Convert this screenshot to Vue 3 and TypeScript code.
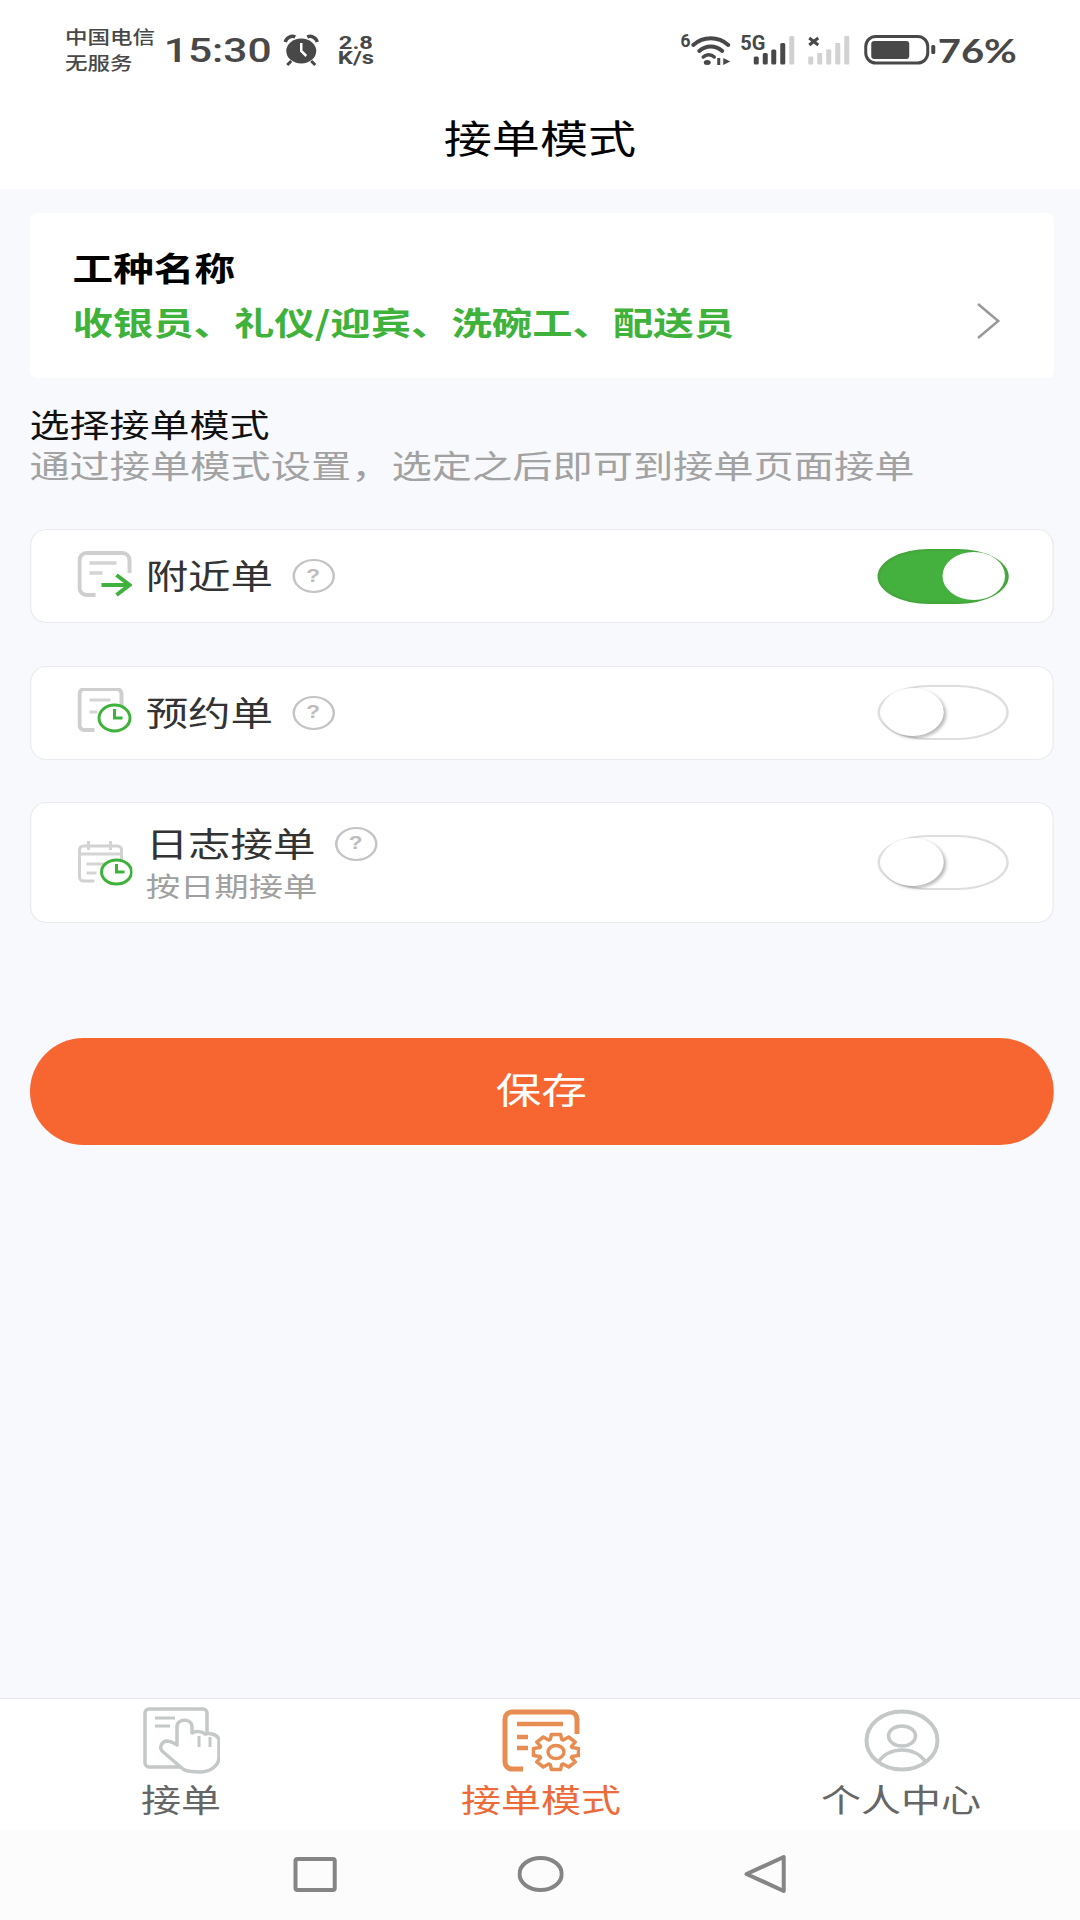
<template>
  <!-- the reference is stretched sideways, so the page is laid out at 864px and widened to 1080 -->
  <div class="screen">
    <div class="status">
      <div class="carrier">
        <span>中国电信</span>
        <span>无服务</span>
      </div>
      <span class="time">15:30</span>
      <svg class="alarm" viewBox="0 0 40 34" preserveAspectRatio="none">
        <ellipse cx="20" cy="18" rx="15" ry="12.500" fill="#484848" />
        <path d="M20 10v8l5 5" fill="none" stroke="#fff" stroke-width="2.5" />
        <path d="M4 9c1-4 6-7 10-5M36 9c-1-4-6-7-10-5" fill="none" stroke="#484848" stroke-width="3.5" />
        <path d="M10 28l-4 4M30 28l4 4" stroke="#484848" stroke-width="3" />
      </svg>
      <div class="speed">
        <span>2.8</span>
        <span>K/s</span>
      </div>
      <svg class="signals" viewBox="680 30 255 40" preserveAspectRatio="none">
        <text x="679" y="47" font-size="18" font-weight="700" font-family="Roboto" fill="#484848">6</text>
        <g fill="none" stroke="#484848" stroke-width="4" stroke-linecap="round">
          <path d="M692 45c10-9 25-9 35 0" />
          <path d="M698 51c7-6 16-6 23 0" />
          <path d="M702 57c3-3 8-3 11 0" stroke-width="3.5" />
        </g>
        <ellipse cx="706" cy="62.500" rx="3.500" ry="2.500" fill="#484848" />
        <rect x="716" y="58" width="3" height="7" fill="#484848" />
        <path d="M722 58l7 3.500-7 3.500z" fill="#484848" />
        <text x="739" y="50" font-size="20" font-weight="700" font-family="Roboto" fill="#484848">5G</text>
        <g fill="#484848">
          <rect x="752.500" y="56.500" width="5" height="8" rx="1.500" />
          <rect x="761.500" y="53" width="5" height="11.500" rx="1.500" />
          <rect x="770" y="49.500" width="5" height="15" rx="1.500" />
          <rect x="779" y="43" width="5" height="21.500" rx="1.500" />
        </g>
        <rect x="788" y="36" width="5" height="28.500" rx="1.500" fill="#d0d0d0" />
        <path d="M808 38l9 7M817 38l-9 7" stroke="#484848" stroke-width="3" />
        <g fill="#d2d2d2">
          <rect x="807" y="56.500" width="5" height="8" rx="1" />
          <rect x="816" y="53" width="5" height="11.500" rx="1" />
          <rect x="825" y="49.500" width="5" height="15" rx="1" />
          <rect x="834" y="43" width="5" height="21.500" rx="1" />
          <rect x="843" y="36" width="5" height="28.500" rx="1" />
        </g>
        <rect x="864.500" y="36.500" width="62" height="26.500" rx="10" fill="none" stroke="#484848" stroke-width="3" />
        <rect x="870" y="41" width="38" height="18" rx="3" fill="#484848" />
        <rect x="930" y="45" width="4" height="9" rx="1.500" fill="#484848" />
      </svg>
      <span class="battery">76%</span>
    </div>

    <header class="title">接单模式</header>

    <main class="content">
      <section class="trade">
        <div class="trade-name">工种名称</div>
        <div class="trade-line">
          <span class="trade-list">收银员、礼仪/迎宾、洗碗工、配送员</span>
          <svg class="chevron" viewBox="0 0 26 38" preserveAspectRatio="none">
            <path d="M3 2l20 17L3 36" fill="none" stroke="#999" stroke-width="2.500" />
          </svg>
        </div>
      </section>

      <div class="heading">选择接单模式</div>
      <div class="hint">通过接单模式设置，选定之后即可到接单页面接单</div>

      <div class="modes">
        <div v-for="mode in modes" :key="mode.id" class="mode" :class="{ tall: mode.sub }">
          <svg v-if="mode.id === 'near'" class="mode-icon" viewBox="0 0 55 50" preserveAspectRatio="none">
            <path d="M18 44H9a7 7 0 0 1-7-7V9a7 7 0 0 1 7-7h36a7 7 0 0 1 7 7v13" fill="none" stroke="#cfcfcf" stroke-width="4" />
            <path d="M12 12h27M12 22h13" stroke="#d4d4d4" stroke-width="3.500" />
            <path d="M24 34h27M39 24l13 10-13 10" fill="none" stroke="#3fb23c" stroke-width="4" />
          </svg>
          <svg v-else-if="mode.id === 'book'" class="mode-icon" viewBox="0 0 55 50" preserveAspectRatio="none">
            <path d="M17 42H7a5 5 0 0 1-5-5V6a5 5 0 0 1 5-5h32a5 5 0 0 1 5 5v12" fill="none" stroke="#cfcfcf" stroke-width="4" />
            <path d="M12 12h21M12 24h8" stroke="#d4d4d4" stroke-width="3" />
            <ellipse cx="37" cy="30" rx="15.500" ry="13" fill="#fff" stroke="#3fb23c" stroke-width="3" />
            <path d="M37 21v9h8" fill="none" stroke="#3fb23c" stroke-width="3" />
          </svg>
          <svg v-else class="mode-icon" viewBox="0 0 55 50" preserveAspectRatio="none">
            <path d="M17 43H6a4 4 0 0 1-4-4V12a4 4 0 0 1 4-4h34a4 4 0 0 1 4 4v10" fill="none" stroke="#d2d2d2" stroke-width="3" />
            <path d="M11 3v9M33 3v9M3 16h40M9 26h22M9 35h10" stroke="#d4d4d4" stroke-width="3" />
            <ellipse cx="39" cy="34" rx="15" ry="12" fill="#fff" stroke="#3fb23c" stroke-width="3" />
            <path d="M39 26v8h8" fill="none" stroke="#3fb23c" stroke-width="3" />
          </svg>

          <div class="mode-text">
            <div class="mode-head">
              <span class="mode-name">{{ mode.name }}</span>
              <span class="help">?</span>
            </div>
            <div v-if="mode.sub" class="mode-sub">{{ mode.sub }}</div>
          </div>

          <div class="switch" :class="{ on: mode.on }">
            <span class="knob"></span>
          </div>
        </div>
      </div>

      <button class="save">保存</button>
    </main>

    <nav class="tabs">
      <div class="tab">
        <svg class="tab-icon" viewBox="-3 0 80 70" preserveAspectRatio="none">
          <path d="M6 3h54a4 4 0 0 1 4 4v50a4 4 0 0 1-4 4H6a4 4 0 0 1-4-4V7a4 4 0 0 1 4-4z" fill="none" stroke="#c5c8c8" stroke-width="3.500" />
          <path d="M12 12h20M12 20h15" stroke="#c5c8c8" stroke-width="3" />
          <path d="M34 39V21c0-9 15-9 15 0v6c3-2 10-2 13 1 4-1 14 0 14 7v16c0 9-9 15-19 15-8 0-14-1-17-3L19 45c-3-4 0-9 4-10 4 0 8 2 11 4z" fill="#fff" stroke="#c5c8c8" stroke-width="3.500" stroke-linejoin="round" />
          <path d="M56 30v11M67 31v10" stroke="#c5c8c8" stroke-width="3" />
        </svg>
        <span>接单</span>
      </div>
      <div class="tab active">
        <svg class="tab-icon" viewBox="0 0 80 70" preserveAspectRatio="none">
          <path d="M23 63H12a7 7 0 0 1-7-7V13a7 7 0 0 1 7-7h58a7 7 0 0 1 7 7v15" fill="none" stroke="#e88d52" stroke-width="5" />
          <path d="M17 18h46M17 31h11M17 42h11" stroke="#e88d52" stroke-width="4.500" />
          <path :d="gear" fill="#fff" stroke="#e88d52" stroke-width="3.500" stroke-linejoin="round" />
          <ellipse cx="56" cy="46" rx="8" ry="6.500" fill="none" stroke="#e88d52" stroke-width="3.500" />
        </svg>
        <span>接单模式</span>
      </div>
      <div class="tab">
        <svg class="tab-icon" viewBox="0 0 80 70" preserveAspectRatio="none">
          <ellipse cx="42" cy="34.500" rx="35.500" ry="29" fill="none" stroke="#c5c8c8" stroke-width="4" />
          <ellipse cx="42" cy="30" rx="13.500" ry="10" fill="none" stroke="#c5c8c8" stroke-width="3.500" />
          <path d="M18 56c6-8 14-12 24-12s18 4 24 12" fill="none" stroke="#c5c8c8" stroke-width="3.500" />
        </svg>
        <span>个人中心</span>
      </div>
    </nav>

    <div class="keys">
      <svg class="key" viewBox="0 0 46 40" preserveAspectRatio="none">
        <rect x="3" y="5" width="39" height="31" rx="2" fill="none" stroke="#858585" stroke-width="4" />
      </svg>
      <svg class="key" viewBox="0 0 46 40" preserveAspectRatio="none">
        <ellipse cx="23" cy="20" rx="21" ry="16" fill="none" stroke="#858585" stroke-width="4" />
      </svg>
      <svg class="key" viewBox="0 0 46 40" preserveAspectRatio="none">
        <path d="M4 20L41 3v34z" fill="none" stroke="#858585" stroke-width="4" stroke-linejoin="round" />
      </svg>
    </div>
  </div>
</template>

<script setup lang="ts">
interface Mode {
  id: string;
  name: string;
  sub?: string;
  on: boolean;
}

const modes: Mode[] = [
  { id: "near", name: "附近单", on: true },
  { id: "book", name: "预约单", on: false },
  { id: "log", name: "日志接单", sub: "按日期接单", on: false },
];

// 8 teeth, drawn directly in the stretched proportions of the tab icon
const makeGear = (cx: number, cy: number, rx: number, ry: number): string => {
  const points: string[] = [];
  for (let i = 0; i < 8; i++) {
    const a = (i * Math.PI) / 4;
    for (const [da, k] of [
      [-0.34, 0.74],
      [-0.2, 1],
      [0.2, 1],
      [0.34, 0.74],
    ]) {
      points.push(`${(cx + Math.cos(a + da) * rx * k).toFixed(1)} ${(cy + Math.sin(a + da) * ry * k).toFixed(1)}`);
    }
  }
  return `M${points.join("L")}z`;
};

const gear = makeGear(56, 46, 23, 18);
</script>

<style>
html,
body {
  margin: 0;
  background: #f8f9fd;
}
</style>

<style scoped>
.screen {
  width: 864px;
  height: 1920px;
  display: flex;
  flex-direction: column;
  transform: scaleX(1.25);
  transform-origin: 0 0;
  background: #f8f9fd;
  font-family: "Noto Sans CJK SC", "Noto Sans", sans-serif;
  color: #333;
  overflow: hidden;
}

.status {
  height: 100px;
  display: flex;
  align-items: center;
  padding-left: 52px;
  background: #fff;
  color: #484848;
}

.carrier {
  width: 72px;
  padding-bottom: 2px;
  display: flex;
  flex-direction: column;
  font-size: 18px;
  font-weight: 500;
  line-height: 26px;
  white-space: nowrap;
}

.time {
  margin-left: 7px;
  font-family: Roboto, sans-serif;
  font-size: 34px;
  font-weight: 500;
  white-space: nowrap;
}

.alarm {
  width: 32px;
  height: 34px;
  margin-left: 8px;
}

.speed {
  margin-left: 13px;
  display: flex;
  flex-direction: column;
  align-items: center;
  font-family: Roboto, sans-serif;
  font-size: 19px;
  font-weight: 700;
  line-height: 15px;
}

.signals {
  width: 204px;
  height: 40px;
  margin-left: 246px;
}

.battery {
  margin-left: 1px;
  font-family: Lato, sans-serif;
  font-size: 32px;
  font-weight: 700;
  white-space: nowrap;
}

.title {
  height: 71px;
  padding-bottom: 18px;
  display: flex;
  align-items: center;
  justify-content: center;
  background: #fff;
  color: #000;
  font-size: 38.5px;
}

.content {
  flex: 1;
  padding: 24px 21.5px 0 23.5px;
}

.trade {
  height: 165px;
  box-sizing: border-box;
  padding: 0 42px 4px 34.5px;
  display: flex;
  flex-direction: column;
  justify-content: center;
  background: #fff;
  border-radius: 6px;
}

.trade-name {
  font-size: 32.5px;
  font-weight: 700;
  line-height: 54px;
  color: #000;
}

.trade-line {
  display: flex;
  align-items: center;
  justify-content: space-between;
  line-height: 54px;
}

.trade-list {
  font-size: 32.3px;
  font-weight: 700;
  color: #3fb23c;
}

.chevron {
  width: 21px;
  height: 38px;
}

.heading {
  margin-top: 25px;
  font-size: 32px;
  line-height: 41px;
  color: #111;
}

.hint {
  font-size: 32.2px;
  line-height: 41px;
  color: #a2a2a2;
}

.modes {
  margin-top: 44px;
  display: flex;
  flex-direction: column;
  gap: 42.5px;
}

.mode {
  height: 94px;
  box-sizing: border-box;
  padding: 0 35px 0 37px;
  display: flex;
  align-items: center;
  background: #fff;
  border: 1px solid #e9ebef;
  border-radius: 13px / 16px;
}

.mode.tall {
  height: 121px;
}

.mode-icon {
  width: 44px;
  height: 50px;
  flex: none;
}

.mode-text {
  flex: 1;
  margin-left: 11px;
}

.tall .mode-text {
  padding-bottom: 2px;
}

.mode-head {
  display: flex;
  align-items: center;
}

.mode-name {
  padding-bottom: 2px;
  font-size: 34px;
  line-height: 44px;
  color: #333;
}

.help {
  width: 34px;
  height: 34px;
  box-sizing: border-box;
  margin-left: 15px;
  display: flex;
  align-items: center;
  justify-content: center;
  border: 2.5px solid #c4c4c4;
  border-radius: 50%;
  font-family: "Liberation Sans", sans-serif;
  font-size: 18px;
  font-weight: 700;
  color: #bcbcbc;
}

.mode-sub {
  font-size: 27.5px;
  line-height: 36px;
  color: #a0a0a0;
}

.switch {
  width: 105px;
  height: 55px;
  box-sizing: border-box;
  padding: 1px;
  display: flex;
  border: 2.5px solid #dedede;
  border-radius: 42px / 28px;
  background: #fff;
}

.switch.on {
  justify-content: flex-end;
  background: #44b03d;
  border-color: #44a63d;
}

.knob {
  width: 50px;
  height: 48px;
  border-radius: 50%;
  background: #fff;
  box-shadow: 2px 2px 3px rgba(0, 0, 0, 0.28);
}

.on .knob {
  box-shadow: none;
}

.save {
  width: 100%;
  height: 107px;
  margin-top: 115px;
  padding: 0 0 6px;
  display: block;
  border: none;
  border-radius: 43px / 53.5px;
  background: #f76530;
  color: #fff;
  font-family: inherit;
  font-size: 36.5px;
}

.tabs {
  height: 131px;
  display: grid;
  grid-template-columns: repeat(3, 1fr);
  background: #fff;
  border-top: 1px solid #e4e6ea;
}

.tab {
  display: flex;
  flex-direction: column;
  align-items: center;
  padding-top: 7px;
  font-size: 32px;
  line-height: 44px;
  color: #666;
}

.tab span {
  margin-left: 1.5px;
}

.tab.active {
  color: #ee6a38;
}

.tab-icon {
  width: 64px;
  height: 70px;
  flex: none;
}

.keys {
  height: 90px;
  padding-bottom: 2px;
  box-sizing: border-box;
  display: flex;
  align-items: center;
  justify-content: center;
  gap: 143px;
  background: #fcfcfc;
}

.key {
  width: 37px;
  height: 40px;
}
</style>
